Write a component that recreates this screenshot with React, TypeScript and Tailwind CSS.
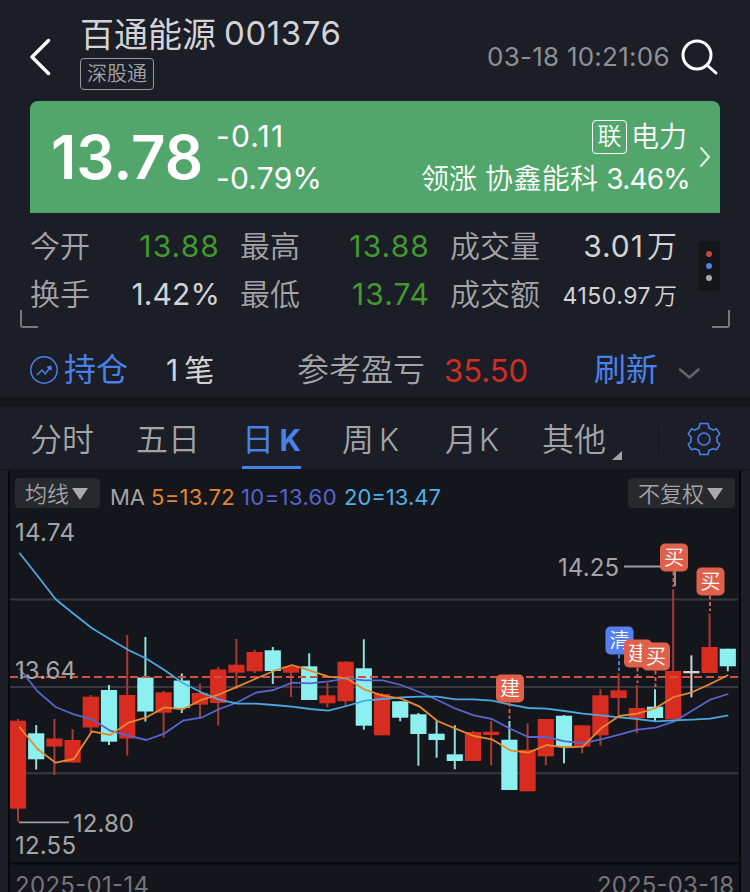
import clsx from "clsx";

type Kind = "up" | "down" | "flat";

// kind, body top, body bottom, wick top, wick bottom
const CANDLES: [Kind, number, number, number, number][] = [
  ["up", 720.7, 808.7, 719, 821.5],
  ["down", 733.3, 759.3, 725, 769.5],
  ["up", 738.5, 746.5, 719, 775],
  ["up", 740, 762.5, 729, 763],
  ["up", 696.7, 727.5, 695, 733],
  ["down", 690, 741.7, 685, 745],
  ["up", 695, 738.5, 635, 755.5],
  ["down", 677.5, 711.5, 637, 721.5],
  ["up", 692.3, 712.7, 691, 737.5],
  ["down", 680.5, 708, 673.5, 713],
  ["up", 693, 704.7, 683.5, 718],
  ["up", 669.5, 703, 667, 725.5],
  ["up", 664.7, 672.7, 639, 689],
  ["up", 652, 671.3, 649.7, 673],
  ["down", 650.3, 671, 647, 684],
  ["up", 666.3, 672.7, 666, 697],
  ["down", 666.3, 700, 653.3, 700],
  ["up", 695.3, 703.3, 682.7, 707.3],
  ["up", 661.7, 701.3, 661, 706],
  ["down", 668.3, 725.7, 639.3, 729.7],
  ["up", 694, 735.3, 693, 735.3],
  ["down", 701.3, 717.7, 701, 721.3],
  ["down", 714.3, 734, 713, 765.7],
  ["down", 733.7, 740, 720, 757.7],
  ["down", 754.3, 761, 725.3, 769.3],
  ["up", 732, 761, 731, 761],
  ["up", 731.7, 735, 721, 765.3],
  ["down", 739.7, 790, 721, 790],
  ["up", 749.7, 791.3, 723.3, 791.3],
  ["up", 719, 756.3, 719, 765.3],
  ["down", 715.7, 746.7, 715, 763.3],
  ["up", 725.3, 746.7, 725, 753.3],
  ["up", 695.3, 735.3, 689.3, 745.7],
  ["up", 690.3, 698, 673.3, 718],
  ["up", 708, 718, 685.3, 733.3],
  ["down", 706.7, 718, 689.3, 721.7],
  ["up", 671, 719.3, 589.3, 719.3],
  ["flat", 671, 673.3, 655.3, 697.3],
  ["up", 647, 673, 613.7, 673],
  ["down", 648.7, 666.3, 648.7, 671.3],
];

const MA5 = [
  726.7, 749, 762.7, 759, 731.3, 735, 722.7, 717.3, 707.3, 709.3, 700, 694.3, 686.7, 678.7, 671, 665, 670.7, 676.7,
  678.3, 689.7, 695.7, 698.7, 706.3, 721, 728.7, 736, 739.3, 750.3, 752.7, 745, 747.3, 746.7, 728.3, 716, 713.7, 708,
  697, 692.3, 684, 675,
];
const MA10 = [
  668.3, 691.3, 707, 714.3, 719.3, 730.7, 735.7, 740, 733.3, 720.7, 717.7, 709, 702.3, 692.7, 690, 682.7, 683.3, 681.3,
  678.7, 680.3, 680.3, 685, 692, 700, 708.7, 715.3, 719, 728.7, 737, 737, 741.3, 743, 739.3, 734.7, 729.7, 727.7,
  721.7, 710.7, 699.7, 694,
];
const MA20 = [
  552.7, 575.7, 599.3, 614, 628.3, 639.3, 650, 658.7, 670.3, 683, 692.3, 699.7, 703.7, 703.7, 705, 706.7, 709, 710.7,
  706, 700.7, 699, 697.3, 696.7, 696.7, 699.3, 699.3, 700.7, 704.7, 708, 708.7, 711, 713.7, 715.3, 717.3, 719, 721.3,
  720.3, 719.7, 718.7, 715.3,
];

const BODY = { up: "#d82c20", down: "#8bf0ef", flat: "#d2d2d4" };
const WICK = { up: "#a83a36", down: "#8fe0df", flat: "#d2d2d4" };

// label, left, top, colour, end of the dotted leader
const MARKS: [string, number, number, string, number][] = [
  ["建", 496, 674.5, "#e0614b", 719],
  ["清", 605.5, 626.5, "#5580f0", 671],
  ["建", 624, 639.5, "#e0614b", 683],
  ["买", 642, 642.5, "#e0614b", 687],
  ["买", 660, 543.5, "#e0614b", 587],
  ["买", 696.5, 567.5, "#e0614b", 611],
];

const toPoints = (values: number[]) => values.map((y, i) => `${19.3 + i * 18.18},${y}`).join(" ");

type StatProps = { label: string; value: string; unit?: string; color: string; className: string };

const Stat = ({ label, value, unit, color, className }: StatProps) => (
  <div className={clsx("flex h-12 items-center justify-between", className)}>
    <span className="font-[350] text-[#a3a4a8]">{label}</span>
    <span className={color}>
      {value}
      {unit && <span className="ml-[3px] font-[350] tracking-normal">{unit}</span>}
    </span>
  </div>
);

const Header = () => (
  <div className="flex h-[101px] pl-[30px]">
    <svg className="mt-[37px] h-10 w-[50px]" viewBox="0 0 50 40" fill="none">
      <path d="M18.5 3.5 2 20l16.5 16.5" stroke="#fff" strokeWidth="3.4" strokeLinecap="round" strokeLinejoin="round" />
    </svg>
    <div className="w-[407px] pt-[13px]">
      <div className="flex h-[42px] items-center whitespace-nowrap text-[#d3d3d5]">
        <span className="w-[144px] text-[34px]">百通能源</span>
        <span className="text-[33px] tracking-[0.6px]">001376</span>
      </div>
      <div className="mt-[3px] flex h-8 w-[74px] items-center justify-center rounded border border-[#98999c] text-[20px] font-[350] text-[#a3a4a8]">
        深股通
      </div>
    </div>
    <span className="mt-[39px] w-[193px] text-[26px] leading-9 tracking-[0.25px] whitespace-nowrap text-[#8f9095]">03-18 10:21:06</span>
    <svg className="mt-[37px] h-10 w-10" viewBox="0 0 40 40" fill="none" stroke="#fff" strokeWidth="3">
      <circle cx="17" cy="18" r="14" />
      <path d="m27.5 28.5 8.5 7.5" strokeLinecap="round" />
    </svg>
  </div>
);

const Quote = () => (
  <div className="mx-[30px] flex h-28 rounded-t-lg bg-[#52a66b] text-white">
    <div className="w-[186px] pl-[21px] text-[60px] leading-[113px] font-semibold">13.78</div>
    <div className="w-[120px] pt-[14px] text-[30px] leading-[42px]">
      <div className="tracking-[1.2px]">-0.11</div>
      <div className="tracking-[0.2px]">-0.79%</div>
    </div>
    <div className="flex flex-1 flex-col items-end pt-[15px] text-[28px] leading-[42px] font-[350] whitespace-nowrap">
      <div className="flex h-[42px] items-center gap-1 pr-[3px]">
        <span className="flex h-[34px] w-[35px] items-center justify-center rounded border border-white text-[24px]">联</span>
        <span>电力</span>
      </div>
      <div className="flex gap-2">
        <span>领涨</span>
        <span className="tracking-[0.3px]">协鑫能科</span>
        <span className="font-normal tracking-[-0.8px]">3.46%</span>
      </div>
    </div>
    <svg className="mt-[44px] w-[30px] h-6" viewBox="0 0 30 24" fill="none">
      <path d="m11 3 8 9-8 9" stroke="#d9eee0" strokeWidth="2.2" strokeLinecap="round" />
    </svg>
  </div>
);

const Stats = () => (
  <div className="flex h-[115px] text-[30px] leading-none whitespace-nowrap">
    <div className="flex w-[30px] items-end pl-5">
      <div className="h-[18px] w-[18px] shrink-0 rounded-bl-[3px] border-b-2 border-l-2 border-[#76777b]" />
    </div>
    <div className="grid h-24 grid-cols-[190px_190px_228px] gap-x-5 pt-[9px]">
      <Stat label="今开" value="13.88" color="text-[#439930] tracking-[1.1px]" className="w-[190px]" />
      <Stat label="最高" value="13.88" color="text-[#439930] tracking-[1.1px]" className="w-[190px]" />
      <Stat label="成交量" value="3.01" unit="万" color="text-[#d3d3d5] tracking-[1px]" className="w-[227px]" />
      <Stat label="换手" value="1.42%" color="text-[#d3d3d5] tracking-[0.1px]" className="w-[190px]" />
      <Stat label="最低" value="13.74" color="text-[#439930] tracking-[1px]" className="w-[190px]" />
      <Stat
        label="成交额"
        value="4150.97"
        unit="万"
        color="pt-[5px] text-[23px] text-[#d3d3d5] tracking-[0.5px]"
        className="w-[227px]"
      />
    </div>
    <div className="flex w-[52px] flex-col items-end justify-between pt-7">
      <div className="mr-[10px] flex h-[50px] w-[22px] flex-col items-center justify-center gap-1.5 rounded bg-[#15161a]">
        <i className="size-1.5 rounded-full bg-[#bf4b38]" />
        <i className="size-1.5 rounded-full bg-[#4a82ee]" />
        <i className="size-1.5 rounded-full bg-[#a9a9ad]" />
      </div>
      <div className="h-[18px] w-[18px] rounded-br-[3px] border-r-2 border-b-2 border-[#76777b]" />
    </div>
  </div>
);

const Position = () => (
  <div className="flex h-[69px] items-center pb-px pl-[30px] pt-[16px] text-[32px] leading-none whitespace-nowrap">
    <svg className="w-[34px] h-7" viewBox="0 0 34 28" fill="none" stroke="#4a80ea" strokeWidth="1.5">
      <circle cx="14" cy="14" r="13.2" />
      <path d="m7 19 5-5 3.300 3.800 4.700-6" />
      <path d="m17 11.300 4-1.300.2 4z" fill="#4a80ea" strokeWidth="1" />
    </svg>
    <span className="w-[102px] text-[#4a80ea]">持仓</span>
    <div className="flex w-[131px] gap-[6px] text-[30px] text-[#d3d3d5]">
      <span>1</span>
      <span>笔</span>
    </div>
    <span className="w-[147px] font-[350] text-[#a3a4a8]">参考盈亏</span>
    <span className="w-[150px] text-[31px] text-[#d12d22]">35.50</span>
    <span className="w-[83px] text-[#4a80ea]">刷新</span>
    <svg className="mt-2 w-6 h-4" viewBox="0 0 24 16" fill="none">
      <path d="m3 3.5 9.5 8 9-8" stroke="#66676c" strokeWidth="2.4" strokeLinecap="round" />
    </svg>
  </div>
);

const Tabs = () => (
  <div className="flex h-[62px] pl-[30px] text-[32px] leading-[66px] font-[350] whitespace-nowrap text-[#a3a4a8]">
    <span className="w-[106px]">分时</span>
    <span className="w-[106px]">五日</span>
    <div className="flex w-[59px] justify-between border-b-3 border-[#4a80ea] text-[#4a80ea]">
      <span className="font-normal">日</span>
      <span className="text-[30px] font-bold">K</span>
    </div>
    <div className="flex w-[144px] gap-[5px] pl-[41px]">
      <span>周</span>
      <span className="text-[31px]">K</span>
    </div>
    <div className="flex w-[97px] gap-[2px]">
      <span>月</span>
      <span className="text-[31px]">K</span>
    </div>
    <span>其他</span>
    <svg className="mt-[44px] ml-[5px] w-3 h-[10px]" viewBox="0 0 12 10">
      <path d="M11 0v9H1z" fill="#a3a4a8" />
    </svg>
    <div className="mt-[18px] ml-[35px] h-7 w-px bg-[#14151a]" />
    <svg className="mt-[15px] ml-[28px] h-[34px] w-[34px]" viewBox="0 0 34 34" fill="none" stroke="#4a80ea" strokeWidth="1.6" strokeLinejoin="round">
      <path d="M13 1.500h8L22 6l4.300 2 3.300-1.200L32.800 12l-2.700 2.700v5l2.700 2.600-3.400 5.500-3.100-1.100-4.300 1.600-1 4.200h-8l-1-4.200-4.300-1.600-3.100 1.100-3.400-5.500 2.700-2.600v-5L1.200 12l3.200-5.200L7.700 8 12 6z" />
      <circle cx="17" cy="17" r="6" />
    </svg>
  </div>
);

const Toolbar = () => (
  <div className="flex h-[39px] items-start pt-[7px] pr-[4px] pl-[5px] text-[22px] whitespace-nowrap text-[#a3a4a8]">
    <div className="flex h-[30px] w-[85px] items-center rounded bg-[#27292d] pt-px pl-[10px] leading-none font-[350]">
      均线
      <svg className="ml-[3px] h-3 w-4" viewBox="0 0 16 12">
        <path d="M0 0h16L8 12z" fill="#a9aaad" />
      </svg>
    </div>
    <div className="flex pt-[4px] pl-[10px] leading-[30px]">
      <span className="w-[41px]">MA</span>
      <span className="w-[90px] tracking-[0.3px] text-[#e5862f]">5=13.72</span>
      <span className="w-[103px] tracking-[0.4px] text-[#5564cf]">10=13.60</span>
      <span className="text-[#4fb0ea]">20=13.47</span>
    </div>
    <div className="ml-auto flex h-[30px] w-[107px] items-center rounded bg-[#27292d] pt-px pl-[10px] leading-none font-[350]">
      不复权
      <svg className="ml-[3px] h-3 w-4" viewBox="0 0 16 12">
        <path d="M0 0h16L8 12z" fill="#a9aaad" />
      </svg>
    </div>
  </div>
);

const Chart = () => (
  <svg className="block h-[382px] w-[729px]" viewBox="10 510 729 382">
    <g fill="none" stroke="#373844" strokeWidth="2">
      <path d="M10 599.5H738M10 687H738M10 773.3H738" />
    </g>
    <path d="M10 863.5H739" stroke="#07080a" strokeWidth="2" />

    {CANDLES.map(([kind, top, bottom, high, low], i) => {
      const x = 18 + i * 18.2;
      return (
        <g key={i}>
          <rect x={x - 1} y={high} width="2" height={low - high} fill={WICK[kind]} />
          <rect x={x - 8.1} y={top} width="16.2" height={bottom - top} fill={BODY[kind]} />
        </g>
      );
    })}

    <path d="M10 677H738" stroke="#cf5143" strokeWidth="2.2" strokeDasharray="8 4" />

    <g fill="none" strokeWidth="1.8" strokeLinejoin="round">
      <polyline points={toPoints(MA10)} stroke="#5564cf" />
      <polyline points={toPoints(MA20)} stroke="#4aa8e4" />
      <polyline points={toPoints(MA5)} stroke="#e5892f" />
    </g>

    <g stroke="#9b9ca0" strokeWidth="1.8" fill="none">
      <path d="M19 822.3H69" />
      <path d="M624 566.5H675V586" />
    </g>

    <g fontSize="24" fill="#a3a4a8">
      <text x="15" y="541" textLength="60">14.74</text>
      <text x="15" y="678.5" textLength="61">13.64</text>
      <text x="73" y="831.5" textLength="61">12.80</text>
      <text x="15" y="853.5" textLength="61">12.55</text>
      <text x="558" y="575.5" textLength="61">14.25</text>
    </g>
    <g fontSize="24" fill="#74757a">
      <text x="15" y="893.5" textLength="134">2025-01-14</text>
      <text x="597" y="893.5" textLength="137">2025-03-18</text>
    </g>

    {MARKS.map(([label, x, y, color, end], i) => (
      <g key={i}>
        <path d={`M${x + 13.5} ${y + 28}V${end}`} stroke={color} strokeWidth="1.8" strokeDasharray="4 2.5" />
        <rect x={x} y={y} width="28" height="28" rx="5" fill={color} />
        <text x={x + 14} y={y + 21.5} fontSize="20" fontWeight="350" fill="#fff" textAnchor="middle">
          {label}
        </text>
      </g>
    ))}
  </svg>
);

export default function App() {
  return (
    <div className="h-[892px] w-[750px] overflow-hidden bg-[#1b1e26] font-['Inter','Noto_Sans_CJK_SC',sans-serif]">
      <Header />
      <Quote />
      <Stats />
      <Position />
      <div className="h-[10px] bg-[#15161b]" />
      <Tabs />
      <div className="h-0.5 bg-[#15161b]" />
      <div className="mx-2 h-[421px] w-[733px] border-x-2 border-[#07080a] bg-[#15161b]">
        <Toolbar />
        <Chart />
      </div>
    </div>
  );
}
